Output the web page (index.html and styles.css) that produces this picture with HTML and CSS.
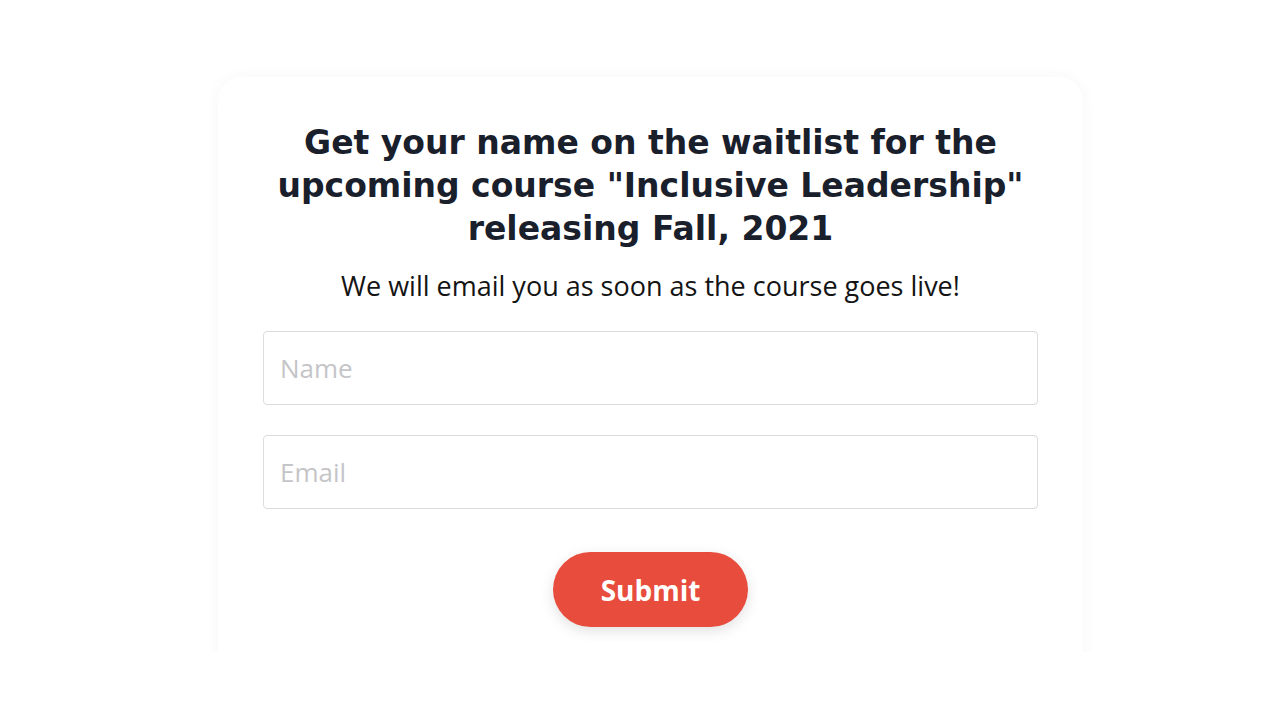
FILE: index.html
```html
<!DOCTYPE html>
<html lang="en">
<head>
<meta charset="utf-8">
<title>Waitlist</title>
<link rel="stylesheet" href="styles.css">
</head>
<body>
<div class="frame">
  <div class="card">
    <h1 class="title">Get your name on the waitlist for the upcoming course "Inclusive Leadership" releasing Fall, 2021</h1>
    <p class="subtitle">We will email you as soon as the course goes live!</p>
    <form class="form">
      <input class="field" type="text" placeholder="Name">
      <input class="field" type="email" placeholder="Email">
      <div class="actions">
        <button class="submit" type="button">Submit</button>
      </div>
    </form>
  </div>
</div>
</body>
</html>
```

FILE: styles.css
```css
html, body {
  margin: 0;
  padding: 0;
  background: #ffffff;
}
.frame {
  height: 652px;
  overflow: hidden;
  padding-top: 77px;
  box-sizing: border-box;
}
.card {
  margin-left: 218px;
  width: 865px;
  box-sizing: border-box;
  background: #ffffff;
  border-radius: 24px;
  box-shadow: 0 0 12px 4px rgba(0, 0, 0, 0.025);
  padding: 44px 45px 60px;
}
.title {
  margin: 0 auto;
  width: 775px;
  text-align: center;
  font-family: "DejaVu Sans", sans-serif;
  font-weight: 700;
  font-size: 33px;
  line-height: 43px;
  color: #19202b;
}
.subtitle {
  margin: 18px 0 0;
  text-align: center;
  font-family: "Open Sans", sans-serif;
  font-size: 27px;
  line-height: 36px;
  color: #141414;
}
.form {
  margin-top: 27px;
  display: flex;
  flex-direction: column;
  gap: 30px;
}
.field {
  display: block;
  width: 100%;
  height: 74px;
  box-sizing: border-box;
  border: 1px solid #dcdcdc;
  border-radius: 4px;
  padding: 0 16px;
  font-family: "Open Sans", sans-serif;
  font-size: 26px;
  color: #333;
  background: #fff;
  outline: none;
}
.field::placeholder {
  color: #c5c5c8;
}
.actions {
  display: flex;
  justify-content: center;
  padding-top: 13px;
}
.submit {
  width: 195px;
  height: 75px;
  border: none;
  border-radius: 38px;
  background: #e84c3d;
  color: #ffffff;
  font-family: "Open Sans", sans-serif;
  font-weight: 700;
  font-size: 28px;
  box-shadow: 0 4px 14px rgba(0, 0, 0, 0.12);
  cursor: pointer;
}
```
